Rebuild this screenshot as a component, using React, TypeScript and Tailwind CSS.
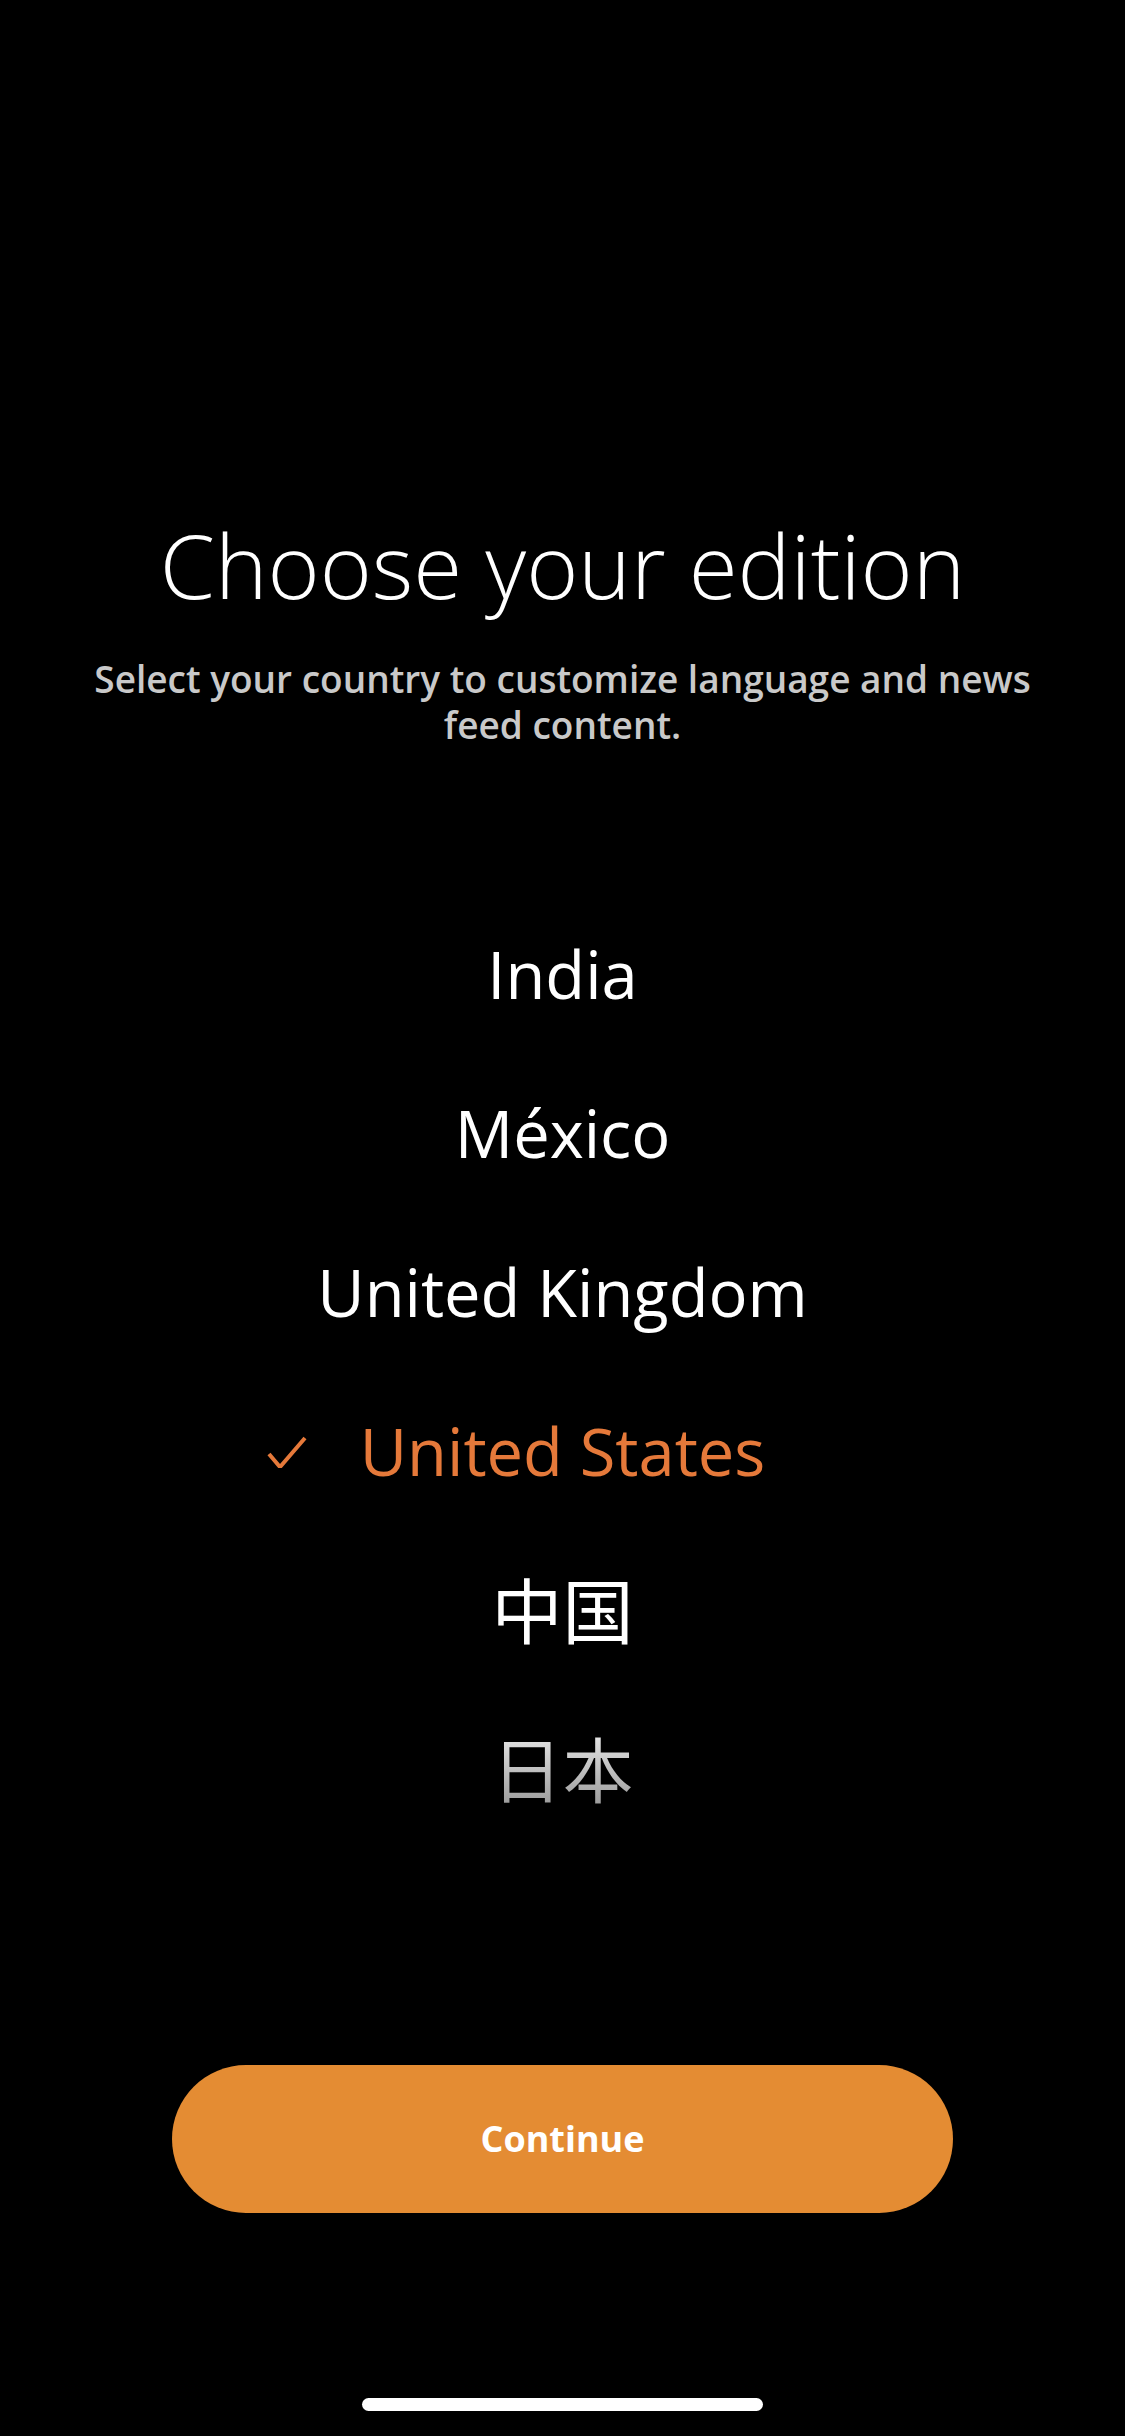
const editions = ['India', 'México', 'United Kingdom', 'United States', '中国', '日本'];

function Check() {
  return (
    <svg
      className="absolute right-full top-1/2 mr-[53px] h-[32px] w-[40px] -translate-y-1/2"
      viewBox="0 0 40 32"
      fill="none"
    >
      <polyline points="2,18 13,31 38,2" stroke="#e5793a" strokeWidth="4" strokeLinejoin="miter" />
    </svg>
  );
}

export default function App() {
  const selected = 'United States';

  return (
    <div className="flex min-h-[2436px] w-full flex-col items-center bg-black font-['Open_Sans',sans-serif] text-white">
      {/* Header */}
      <h1 className="mt-[520px] text-[89px] font-light leading-none">Choose your edition</h1>
      <p className="mt-[47px] max-w-[980px] text-center text-[37px] font-semibold leading-[46px] text-[#c9c9c9]">
        Select your country to customize language and news feed content.
      </p>

      {/* Edition list */}
      <ul className="mt-[147px] flex w-full flex-col items-center font-['Open_Sans','Noto_Sans_CJK_SC',sans-serif]">
        {editions.map((name) => {
          const active = name === selected;
          let cls = 'relative text-[65px] leading-none';
          if (active) cls = 'relative text-[65px] leading-none text-[#e5793a]';
          if (name === '中国') cls = 'relative text-[71px] leading-none';
          if (name === '日本')
            cls =
              'relative bg-gradient-to-b from-[#e6e6e6] to-[#9c9c9c] bg-clip-text text-[71px] leading-none text-transparent';
          return (
            <li key={name} className="flex h-[159px] items-center justify-center">
              <span className={cls}>
                {active && <Check />}
                {name}
              </span>
            </li>
          );
        })}
      </ul>

      {/* Action */}
      <button className="mt-[216px] flex h-[148px] w-[781px] items-center justify-center rounded-full bg-[#e48c33] text-[36px] font-bold text-white">
        Continue
      </button>

      <div className="mt-[185px] h-[13px] w-[401px] rounded-full bg-white" />
    </div>
  );
}
